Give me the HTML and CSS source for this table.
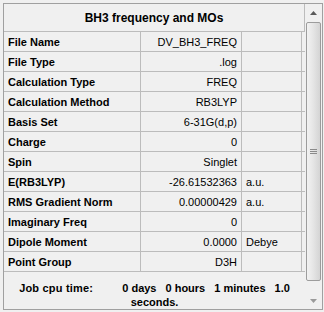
FILE: index.html
```html
<!DOCTYPE html>
<html>
<head>
<meta charset="utf-8">
<title>BH3 frequency and MOs</title>
<link rel="stylesheet" href="styles.css">
</head>
<body>
<div class="panel">
  <div class="sheet">
    <div class="title">BH3 frequency and MOs</div>
    <div class="row"><div class="lbl">File Name</div><div class="val">DV_BH3_FREQ</div><div class="unit"></div></div>
    <div class="row"><div class="lbl">File Type</div><div class="val">.log</div><div class="unit"></div></div>
    <div class="row"><div class="lbl">Calculation Type</div><div class="val">FREQ</div><div class="unit"></div></div>
    <div class="row"><div class="lbl">Calculation Method</div><div class="val">RB3LYP</div><div class="unit"></div></div>
    <div class="row"><div class="lbl">Basis Set</div><div class="val">6-31G(d,p)</div><div class="unit"></div></div>
    <div class="row"><div class="lbl">Charge</div><div class="val">0</div><div class="unit"></div></div>
    <div class="row"><div class="lbl">Spin</div><div class="val">Singlet</div><div class="unit"></div></div>
    <div class="row"><div class="lbl">E(RB3LYP)</div><div class="val">-26.61532363</div><div class="unit">a.u.</div></div>
    <div class="row"><div class="lbl">RMS Gradient Norm</div><div class="val">0.00000429</div><div class="unit">a.u.</div></div>
    <div class="row"><div class="lbl">Imaginary Freq</div><div class="val">0</div><div class="unit"></div></div>
    <div class="row"><div class="lbl">Dipole Moment</div><div class="val">0.0000</div><div class="unit">Debye</div></div>
    <div class="row"><div class="lbl">Point Group</div><div class="val">D3H</div><div class="unit"></div></div>
    <div class="footer">
      <div class="line"><span class="key">Job cpu time:</span><span class="part first">0 days</span><span class="part">0 hours</span><span class="part">1 minutes</span><span class="part">1.0</span></div>
      <div class="line">seconds.</div>
    </div>
  </div>
  <div class="scrollbar">
    <div class="arrow">
      <svg width="7" height="4" viewBox="0 0 7 4"><path d="M0 4 L3.5 0 L7 4 Z" fill="#5a5a5a"/></svg>
    </div>
    <div class="track">
      <div class="thumb">
        <svg width="7" height="5" viewBox="0 0 7 5"><path d="M0 0.5 H7 M0 2.5 H7 M0 4.5 H7" stroke="#8a8a8a" stroke-width="1"/></svg>
      </div>
    </div>
    <div class="arrow">
      <svg width="7" height="4" viewBox="0 0 7 4"><path d="M0 0 L3.5 4 L7 0 Z" fill="#9a9a9a"/></svg>
    </div>
  </div>
</div>
</body>
</html>
```

FILE: styles.css
```css
html, body {
  margin: 0;
  padding: 0;
  background: #f0f0f0;
}

body {
  font-family: "Liberation Sans", Arial, sans-serif;
  font-size: 11px;
  color: #000;
}

.panel {
  margin: 3px 0 0 3px;
  width: 318px;
  height: 305px;
  border: 1px solid #a0a0a0;
  display: flex;
  background: #f0f0f0;
}

.sheet {
  width: 301px;
  display: flex;
  flex-direction: column;
}

.title {
  height: 28px;
  box-sizing: border-box;
  padding-top: 1px;
  border-bottom: 1px solid #bcbcbc;
  border-right: 1px solid #bcbcbc;
  display: flex;
  align-items: center;
  justify-content: center;
  font-weight: bold;
  font-size: 12px;
}

.row {
  display: flex;
  height: 20px;
  box-sizing: border-box;
  border-bottom: 1px solid #bcbcbc;
}

.row > div {
  border-right: 1px solid #bcbcbc;
  display: flex;
  align-items: center;
  white-space: nowrap;
}

.lbl {
  width: 137px;
  padding-left: 4px;
  box-sizing: border-box;
  font-weight: bold;
}

.val {
  width: 101px;
  padding-right: 4px;
  box-sizing: border-box;
  justify-content: flex-end;
}

.unit {
  width: 60px;
  padding-left: 4px;
  box-sizing: border-box;
}

.footer {
  flex: 1;
  padding-top: 9px;
  font-weight: bold;
  text-align: center;
  line-height: 14px;
}

.footer .line {
  white-space: nowrap;
}

.key {
  letter-spacing: 0.2px;
}

.part {
  margin-left: 9px;
}

.part.first {
  margin-left: 29px;
}

.scrollbar {
  width: 17px;
  display: flex;
  flex-direction: column;
  background: #f0f0f0;
}

.arrow {
  height: 17px;
  display: flex;
  align-items: center;
  justify-content: center;
}

.track {
  flex: 1;
  padding: 1px 1px 11px 1px;
  display: flex;
}

.thumb {
  flex: 1;
  border: 1px solid #9c9c9c;
  border-radius: 2px;
  background: linear-gradient(to right, #f2f2f2 0%, #e6e6e6 45%, #d4d4d4 100%);
  display: flex;
  align-items: center;
  justify-content: center;
}
```
